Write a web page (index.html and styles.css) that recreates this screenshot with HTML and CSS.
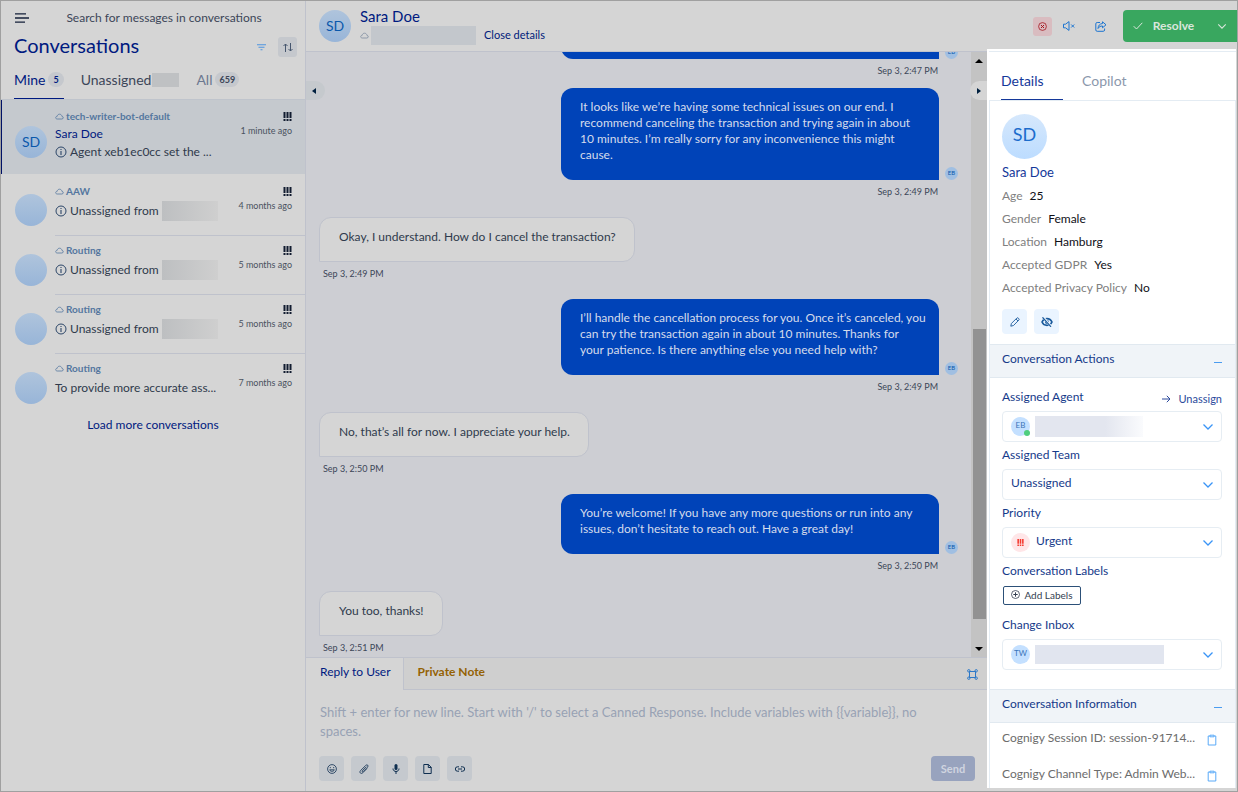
FILE: index.html
```
<!doctype html>
<html lang="en">
<head>
<meta charset="utf-8">
<title>Conversations</title>
<link rel="stylesheet" href="styles.css">
</head>
<body>

<svg class="sprite" aria-hidden="true">
  <symbol id="i-cloud" viewBox="0 0 9 7"><path d="M2.2 6h4.7c.8 0 1.4-.6 1.4-1.3 0-.7-.6-1.2-1.3-1.2C6.800 2.100 5.800 1.200 4.500 1.200S2.400 2.100 2.200 3.300C1.300 3.300.7 3.900.7 4.700.7 5.400 1.300 6 2.200 6z" fill="none" stroke="currentColor" stroke-width=".8"/></symbol>
  <symbol id="i-info" viewBox="0 0 12 12"><circle cx="6" cy="6" r="5" fill="none" stroke="currentColor"/><path d="M6 5v4M6 3v1" stroke="currentColor" stroke-width="1.100"/></symbol>
  <symbol id="i-urgent" viewBox="0 0 9 9"><path d="M1.500 0v6M4.500 0v6M7.500 0v6M1.500 7v2M4.500 7v2M7.500 7v2" stroke="currentColor" stroke-width="2"/></symbol>
  <symbol id="i-chevron" viewBox="0 0 12 8"><path d="M1.500 1.500L6 6l4.500-4.500" fill="none" stroke="currentColor" stroke-width="1.300"/></symbol>
  <symbol id="i-clip" viewBox="0 0 10 12"><path d="M3 2H1.200v9h7.600V2H7M3 1.200h4v1.600H3z" fill="none" stroke="currentColor"/></symbol>
</svg>

<div class="app">

  <aside class="sidebar">
    <div class="search">
      <button class="plain menu" aria-label="Menu"><svg width="14" height="10" viewBox="0 0 14 10"><path d="M0 .8h11M0 5h14M0 9.200h10" stroke="currentColor" stroke-width="1.300"/></svg></button>
      <input type="text" aria-label="Search" placeholder="Search for messages in conversations">
    </div>
    <div class="title">
      <h1>Conversations</h1>
      <button class="plain filter" aria-label="Filter"><svg width="9" height="7" viewBox="0 0 9 7"><path d="M0 .7h9M1.500 3.200h6M3.500 5.800h2" stroke="currentColor" stroke-width="1.100"/></svg></button>
      <button class="sort" aria-label="Sort"><svg width="10" height="9" viewBox="0 0 10 9"><path d="M2.500 9V1M.5 3l2-2 2 2M7.500 0v8M5.500 6l2 2 2-2" fill="none" stroke="currentColor"/></svg></button>
    </div>
    <nav class="tabs">
      <button class="tab active">Mine <span class="count">5</span></button>
      <button class="tab dark">Unassigned<span class="redact small"></span></button>
      <button class="tab">All <span class="count">659</span></button>
    </nav>

    <ul class="list">
      <li class="item selected">
        <span class="avatar">SD</span>
        <div class="info">
          <div class="inbox"><svg class="cloud"><use href="#i-cloud"/></svg>tech-writer-bot-default</div>
          <div class="who">Sara Doe</div>
          <div class="last"><svg class="i12"><use href="#i-info"/></svg>Agent xeb1ec0cc set the ...</div>
        </div>
        <div class="meta"><svg class="i9"><use href="#i-urgent"/></svg><time>1 minute ago</time></div>
      </li>
      <li class="item">
        <span class="avatar"></span>
        <div class="info">
          <div class="inbox"><svg class="cloud"><use href="#i-cloud"/></svg>AAW</div>
          <div class="last"><svg class="i12"><use href="#i-info"/></svg>Unassigned from <span class="redact fade"></span></div>
        </div>
        <div class="meta"><svg class="i9"><use href="#i-urgent"/></svg><time>4 months ago</time></div>
      </li>
      <li class="item">
        <span class="avatar"></span>
        <div class="info">
          <div class="inbox"><svg class="cloud"><use href="#i-cloud"/></svg>Routing</div>
          <div class="last"><svg class="i12"><use href="#i-info"/></svg>Unassigned from <span class="redact fade"></span></div>
        </div>
        <div class="meta"><svg class="i9"><use href="#i-urgent"/></svg><time>5 months ago</time></div>
      </li>
      <li class="item">
        <span class="avatar"></span>
        <div class="info">
          <div class="inbox"><svg class="cloud"><use href="#i-cloud"/></svg>Routing</div>
          <div class="last"><svg class="i12"><use href="#i-info"/></svg>Unassigned from <span class="redact fade"></span></div>
        </div>
        <div class="meta"><svg class="i9"><use href="#i-urgent"/></svg><time>5 months ago</time></div>
      </li>
      <li class="item">
        <span class="avatar"></span>
        <div class="info">
          <div class="inbox"><svg class="cloud"><use href="#i-cloud"/></svg>Routing</div>
          <div class="last">To provide more accurate ass...</div>
        </div>
        <div class="meta"><svg class="i9"><use href="#i-urgent"/></svg><time>7 months ago</time></div>
      </li>
    </ul>
    <button class="plain more">Load more conversations</button>
  </aside>

  <main class="main">
    <header class="top">
      <span class="avatar">SD</span>
      <div class="person">
        <h2>Sara Doe</h2>
        <div class="sub"><svg class="cloud"><use href="#i-cloud"/></svg><span class="redact wide"></span><a href="#">Close details</a></div>
      </div>
      <div class="actions">
        <button class="danger" aria-label="End"><svg width="9" height="9" viewBox="0 0 9 9"><path d="M3 3l3 3M6 3L3 6" stroke="currentColor"/><circle cx="4.500" cy="4.500" r="3.900" fill="none" stroke="currentColor" stroke-width=".8"/></svg></button>
        <button class="plain" aria-label="Mute"><svg width="12" height="10" viewBox="0 0 12 10"><path d="M.5 3.200h2L6 .6v8.800L2.500 6.800h-2zM8.200 3.500l3 3M11.200 3.500l-3 3" fill="none" stroke="currentColor"/></svg></button>
        <button class="plain" aria-label="Share"><svg width="12" height="11" viewBox="0 0 12 11"><path d="M5 1.500H2.200C1.300 1.500.8 2 .8 2.800V9c0 .8.5 1.300 1.400 1.300h6c.9 0 1.400-.5 1.400-1.300V7.500M7.500.8l3.500 3-3.500 3V5C5.500 5 4 5.700 3 7.500c.2-3 1.700-4.700 4.500-5z" fill="none" stroke="currentColor"/></svg></button>
      </div>
      <button class="resolve"><svg width="10" height="8" viewBox="0 0 10 8"><path d="M.7 4.200l2.800 2.800L9.300.8" fill="none" stroke="currentColor"/></svg><span>Resolve</span><svg class="chev" width="10" height="7"><use href="#i-chevron"/></svg></button>
    </header>

    <div class="content">
      <section class="conversation">
        <button class="handle left" aria-label="Collapse list"><svg width="4" height="6" viewBox="0 0 4 6"><path d="M4 0v6L0 3z" fill="currentColor"/></svg></button>
        <div class="chat">
          <div class="messages">
            <div class="msg agent">
              <div class="row"><p class="bubble"></p><span class="mini">EB</span></div>
              <time>Sep 3, 2:47 PM</time>
            </div>
            <div class="msg agent">
              <div class="row"><p class="bubble">It looks like we’re having some technical issues on our end. I recommend canceling the transaction and trying again in about 10&nbsp;minutes. I’m really sorry for any inconvenience this might cause.</p><span class="mini">EB</span></div>
              <time>Sep 3, 2:49 PM</time>
            </div>
            <div class="msg user">
              <div class="row"><p class="bubble">Okay, I understand. How do I cancel the transaction?</p></div>
              <time>Sep 3, 2:49 PM</time>
            </div>
            <div class="msg agent">
              <div class="row"><p class="bubble">I’ll handle the cancellation process for you. Once it’s canceled, you can try the transaction again in about 10 minutes. Thanks for your&nbsp;patience. Is there anything else you need help with?</p><span class="mini">EB</span></div>
              <time>Sep 3, 2:49 PM</time>
            </div>
            <div class="msg user">
              <div class="row"><p class="bubble">No, that’s all for now. I appreciate your help.</p></div>
              <time>Sep 3, 2:50 PM</time>
            </div>
            <div class="msg agent">
              <div class="row"><p class="bubble">You’re welcome! If you have any more questions or run into any issues, don’t hesitate to reach out. Have a great day!</p><span class="mini">EB</span></div>
              <time>Sep 3, 2:50 PM</time>
            </div>
            <div class="msg user">
              <div class="row"><p class="bubble">You too, thanks!</p></div>
              <time>Sep 3, 2:51 PM</time>
            </div>
          </div>
          <div class="scrollbar">
            <svg width="8" height="4" viewBox="0 0 8 4"><path d="M0 4l4-4 4 4z"/></svg>
            <div class="track"><div class="thumb"></div></div>
            <svg width="8" height="4" viewBox="0 0 8 4"><path d="M0 0l4 4 4-4z"/></svg>
          </div>
        </div>

        <form class="composer">
          <div class="modes">
            <button type="button" class="mode active">Reply to User</button>
            <button type="button" class="mode note">Private Note</button>
            <button type="button" class="plain expand" aria-label="Expand"><svg width="11" height="11" viewBox="0 0 11 11"><path d="M2.500 2.500h6v6h-6z" fill="none" stroke="currentColor"/><g fill="none" stroke="currentColor"><circle cx="1.800" cy="1.800" r="1.200"/><circle cx="9.200" cy="1.800" r="1.200"/><circle cx="1.800" cy="9.200" r="1.200"/><circle cx="9.200" cy="9.200" r="1.200"/></g></svg></button>
          </div>
          <textarea rows="2" aria-label="Message" placeholder="Shift + enter for new line. Start with '/' to select a Canned Response. Include variables with {{variable}}, no spaces."></textarea>
          <div class="tools">
            <button type="button" class="tool" aria-label="Emoji"><svg width="10" height="10" viewBox="0 0 10 10"><circle cx="5" cy="5" r="4.400" fill="none" stroke="currentColor" stroke-width=".8"/><path d="M2.600 5.800c.9 2 3.900 2 4.800 0zM3.300 3v1.200M6.700 3v1.200" fill="none" stroke="currentColor" stroke-width=".8"/></svg></button>
            <button type="button" class="tool" aria-label="Attach"><svg width="10" height="10" viewBox="0 0 10 10"><path d="M7.200 2.700L3.200 6.800c-.5.6.3 1.400.9.9l4.500-4.600C9.900 1.600 8.200 0 6.800 1.300L1.600 6.500C-.2 8.400 2 10.500 3.800 8.800L8 4.500" fill="none" stroke="currentColor" stroke-width=".8"/></svg></button>
            <button type="button" class="tool" aria-label="Record"><svg width="8" height="10" viewBox="0 0 8 10"><rect x="2.500" width="3" height="6" rx="1.500" fill="currentColor"/><path d="M1 4.500c0 4 6 4 6 0M4 7.500V10" fill="none" stroke="currentColor"/></svg></button>
            <button type="button" class="tool" aria-label="File"><svg width="9" height="10" viewBox="0 0 9 10"><path d="M.8.5h4.700l2.700 2.800v6.200H.8zM5.300.5v3h3" fill="none" stroke="currentColor"/></svg></button>
            <button type="button" class="tool" aria-label="Link"><svg width="10" height="6" viewBox="0 0 10 6"><path d="M4 .8H2.500a2.200 2.200 0 000 4.400H4M6 .8h1.500a2.200 2.200 0 010 4.400H6M3 3h4" fill="none" stroke="currentColor"/></svg></button>
            <button type="submit" class="send">Send</button>
          </div>
        </form>
      </section>

      <aside class="details">
        <button class="handle right" aria-label="Collapse details"><svg width="4" height="6" viewBox="0 0 4 6"><path d="M0 0v6l4-3z" fill="currentColor"/></svg></button>
        <nav class="dtabs">
          <button class="dtab active">Details</button>
          <button class="dtab">Copilot</button>
        </nav>
        <div class="panel">
          <div class="profile">
            <span class="avatar big">SD</span>
            <h3>Sara Doe</h3>
            <dl>
              <div><dt>Age</dt><dd>25</dd></div>
              <div><dt>Gender</dt><dd>Female</dd></div>
              <div><dt>Location</dt><dd>Hamburg</dd></div>
              <div><dt>Accepted GDPR</dt><dd>Yes</dd></div>
              <div><dt>Accepted Privacy Policy</dt><dd>No</dd></div>
            </dl>
            <div class="edit">
              <button class="tool" aria-label="Edit"><svg width="10" height="10" viewBox="0 0 10 10"><path d="M.8 9.200l.6-2.700L7 .9c.8-.6 2.700 1.200 2 2L3.500 8.500zM6 2l2 2" fill="none" stroke="currentColor" stroke-width=".9"/></svg></button>
              <button class="tool" aria-label="Hide"><svg width="12" height="10" viewBox="0 0 12 10"><path d="M1 5c2-4.500 8-4.500 10 0-2 4.500-8 4.500-10 0z" fill="none" stroke="currentColor" stroke-width="1.600"/><circle cx="6" cy="5" r="2" fill="currentColor"/><path d="M2 0l8.500 10" stroke="#eaf4ff" stroke-width="2.400"/><path d="M1.500 .3l8.500 9.500" stroke="currentColor" stroke-width="1.200"/></svg></button>
            </div>
          </div>

          <h4 class="head"><span>Conversation Actions</span><i></i></h4>
          <div class="fields">
            <div class="label-row"><label for="agent">Assigned Agent</label><button class="plain unassign"><svg width="9" height="8" viewBox="0 0 9 8"><path d="M0 4h8M4.800 .8L8 4 4.800 7.200" fill="none" stroke="currentColor"/></svg>Unassign</button></div>
            <div class="select">
              <span class="badge">EB<b></b></span><span class="redact agent-name"></span>
              <select id="agent"><option></option></select>
              <svg class="arrow"><use href="#i-chevron"/></svg>
            </div>
            <label for="team">Assigned Team</label>
            <div class="select">
              <select id="team"><option>Unassigned</option></select>
              <svg class="arrow"><use href="#i-chevron"/></svg>
            </div>
            <label for="priority">Priority</label>
            <div class="select">
              <span class="badge red"><svg width="7" height="7"><use href="#i-urgent"/></svg></span>
              <select id="priority"><option>Urgent</option></select>
              <svg class="arrow"><use href="#i-chevron"/></svg>
            </div>
            <div class="caption">Conversation Labels</div>
            <button class="add"><svg width="9" height="9" viewBox="0 0 9 9"><circle cx="4.500" cy="4.500" r="4" fill="none" stroke="currentColor" stroke-width=".8"/><path d="M4.500 2.300v4.400M2.300 4.500h4.400" stroke="currentColor"/></svg>Add Labels</button>
            <label for="inbox">Change Inbox</label>
            <div class="select">
              <span class="badge">TW</span><span class="redact inbox-name"></span>
              <select id="inbox"><option></option></select>
              <svg class="arrow"><use href="#i-chevron"/></svg>
            </div>
          </div>

          <h4 class="head"><span>Conversation Information</span><i></i></h4>
          <ul class="facts">
            <li><span>Cognigy Session ID: session-91714...</span><button class="plain" aria-label="Copy"><svg width="10" height="12"><use href="#i-clip"/></svg></button></li>
            <li><span>Cognigy Channel Type: Admin Web...</span><button class="plain" aria-label="Copy"><svg width="10" height="12"><use href="#i-clip"/></svg></button></li>
          </ul>
        </div>
      </aside>
    </div>
  </main>

</div>

</body>
</html>
```
FILE: styles.css
```
* { box-sizing:border-box; }

html, body { height:100%; margin:0; }

body {
  font: 12px/16px Lato, "Open Sans", sans-serif;
  color:#2f3a4c;
  background:#d5d5d5;
}

h1, h2, h3, h4, p, ul, dl, dd { margin:0; padding:0; font-weight:normal; }
ul { list-style:none; }
button, input, select, textarea { font:inherit; color:inherit; border:0; margin:0; padding:0; background:none; }
button { display:flex; align-items:center; justify-content:center; }
svg { flex:none; display:block; }
a { text-decoration:none; }

.sprite { position:absolute; width:0; height:0; }
.cloud { width:9px; height:7px; }
.i9 { width:9px; height:9px; }
.i12 { width:12px; height:12px; }

.app {
  display:flex;
  height:100vh;
  border:1px solid #a0a0a0;
  overflow:hidden;
}

.avatar {
  flex:none;
  display:flex;
  align-items:center;
  justify-content:center;
  width:32px;
  height:32px;
  border-radius:50%;
  background:linear-gradient(#afc4dc, #98b5d8);
  color:#0a58ac;
  font-size:14px;
}

.redact { flex:none; display:block; background:#bfc1c3; }

/* sidebar */
.sidebar { flex:none; width:305px; border-right:1px solid #bfc2cc; }

.search { display:flex; align-items:center; height:32px; padding:2px 14px 0; }
.menu { color:#15203a; width:14px; }
.search input { flex:1; min-width:0; padding-left:8px; text-align:center; outline:0; }
.search input::placeholder { color:#3c4658; opacity:1; }

.title { display:flex; align-items:center; height:28px; padding:0 8px 0 13px; }
.title h1 { flex:1; font-size:20px; line-height:24px; padding-bottom:4px; color:#001a80; }
.filter { color:#4f95e0; margin-right:12px; }
.sort { width:19px; height:20px; border-radius:3px; background:#c5c8cd; color:#46566e; }

.tabs { display:flex; gap:17px; height:39px; padding:0 13px; border-bottom:1px solid #bfc4cc; }
.tab { gap:3px; font-size:14px; color:#6c7890; border-bottom:1px solid transparent; }
.tab.dark { color:#3c4658; gap:1px; }
.tab.active { color:#001a80; border-color:#001a80; }
.count {
  padding:0 4px;
  border-radius:8px;
  background:#c5c8cd;
  font-size:9px;
  line-height:15px;
  font-weight:bold;
  color:#3c4658;
}
.tab.active .count { padding:0 5px; color:#001a80; }
.redact.small { width:27px; height:14px; }

.item { position:relative; display:flex; height:59px; padding:7px 13px 0 14px; }
.item + .item::before {
  content:"";
  position:absolute;
  left:54px; right:0; top:-1px;
  height:1px;
  background:#bfc2cc;
}
.item .avatar { margin:11px 8px 0 0; }
.info { flex:1; min-width:0; }
.inbox { display:flex; align-items:center; gap:2px; font-size:10px; line-height:14px; font-weight:bold; color:#54779f; }
.who { line-height:16px; color:#001a80; margin-top:3px; }
.last { display:flex; align-items:center; gap:3px; height:20px; margin-top:3px; white-space:nowrap; }
.last svg { color:#2c4668; }
.meta { display:flex; flex-direction:column; align-items:flex-end; gap:4px; padding-top:3px; color:#121c30; }
.meta time { font-size:9px; line-height:12px; color:#4a5260; }
.redact.fade { width:56px; height:20px; background:linear-gradient(90deg, #bdbfc1, #cfcfcf); }
.item.selected {
  height:74px;
  margin-bottom:2px;
  padding:9px 13px 0 13px;
  border-left:1px solid #001166;
  background:#c5c9ce;
}
.item.selected .avatar { margin-top:17px; }
.item.selected .last { margin-top:0; }
.item.selected + .item { height:60px; padding-top:8px; }
.item.selected + .item .avatar { margin-top:10px; }
.item.selected + .item::before { display:none; }
.more { margin:4px auto 0; color:#001a80; }

/* header */
.main { flex:1; min-width:0; display:flex; flex-direction:column; }
.top { flex:none; display:flex; align-items:center; height:51px; padding-left:13px; border-bottom:1px solid #bfc2cc; }
.person { margin-left:9px; flex:1; }
.person h2 { font-size:15px; line-height:16px; padding-bottom:2px; color:#001a80; }
.sub { display:flex; align-items:center; height:19px; gap:2px; font-size:11px; }
.sub .cloud { color:#7d8ca0; }
.sub a { margin-left:6px; color:#00207a; }
.redact.wide { width:105px; height:19px; background:#c3c7cc; }
.actions { display:flex; align-items:center; gap:11px; margin-right:12px; color:#1c74d0; }
.actions .plain { width:21px; height:20px; }
.danger { width:19px; height:19px; margin-right:-5px; border-radius:3px; background:#d9bcc0; color:#a5141e; }
.resolve {
  width:114px;
  height:32px;
  border-radius:4px 0 0 4px;
  background:#39a75f;
  color:#d9e6dc;
  font-weight:bold;
  gap:10px;
}
.resolve .chev { margin-left:13px; }

.content { flex:1; min-height:0; display:flex; }

/* conversation */
.conversation { position:relative; flex:1; min-width:0; display:flex; flex-direction:column; }
.chat { flex:1; min-height:0; display:flex; background:#cdced3; }
.messages {
  flex:1;
  min-width:0;
  display:flex;
  flex-direction:column;
  justify-content:flex-end;
  padding:0 13px 3px;
  overflow:hidden;
}
.msg { flex:none; display:flex; flex-direction:column; align-items:flex-start; margin-top:11px; }
.msg.agent { align-items:flex-end; }
.user + .agent, .agent + .user { margin-top:19px; }
.row { display:flex; align-items:flex-end; gap:6px; }
.bubble {
  max-width:378px;
  padding:11px 10px 17px 19px;
  border-radius:12px 12px 0 12px;
  background:#0043b8;
  color:#d5dcec;
}
.bubble:empty { width:378px; height:60px; }
.user .bubble {
  padding:11px 18px 16px 19px;
  border:1px solid #bfc2cc;
  border-radius:12px 12px 12px 0;
  background:#d5d5d5;
  color:#2f3a4c;
}
.msg time { margin:6px 4px 0; font-size:9px; line-height:12px; color:#3c4658; }
.msg.agent time { margin-right:20px; }
.mini {
  width:13px;
  height:13px;
  border-radius:50%;
  background:#a0bfe2;
  color:#0a58ac;
  font-size:6px;
  line-height:11px;
  text-align:center;
}

.scrollbar {
  flex:none;
  width:16px;
  display:flex;
  flex-direction:column;
  align-items:center;
  gap:8px;
  padding:7px 0 6px;
  background:#c3c3c3;
}
.track { flex:1; width:13px; display:flex; flex-direction:column; justify-content:flex-end; padding-bottom:20px; }
.thumb { height:53%; background:#929292; }

.handle {
  position:absolute;
  top:29px;
  width:19px;
  height:19px;
  color:#00203f;
}
.handle.left { left:0; padding-right:3px; border-radius:0 10px 10px 0; background:#c5c9cd; }
.handle.right { left:-17px; top:32px; width:17px; border-radius:10px 0 0 10px; background:#d5d5d5; }

/* composer */
.composer { flex:none; border-top:1px solid #bfc2cc; }
.modes { display:flex; height:32px; padding-right:9px; background:linear-gradient(#bfc2cc, #bfc2cc) 0 100%/100% 1px no-repeat #cfcfcf; }
.mode { padding:0 14px 4px; font-weight:bold; }
.mode.active { padding:0 12px 4px 14px; font-weight:normal; color:#001a80; background:#d5d5d5; border-right:1px solid #bfc2cc; }
.mode.note { color:#946204; }
.expand { width:11px; margin-left:auto; color:#2c78c8; }
.composer textarea { display:block; width:100%; height:38px; margin-top:13px; padding:0 30px 0 14px; font-size:13px; line-height:19px; resize:none; outline:0; overflow:hidden; }
.composer textarea::placeholder { color:#98a2b4; opacity:1; }
.tools { display:flex; gap:7px; padding:15px 12px 10px 13px; }
.tool { width:25px; height:25px; border-radius:4px; background:#c5c9ce; color:#0f2f50; }
.send { width:44px; height:25px; margin-left:auto; border-radius:4px; background:#98a3be; color:#d0d5e0; font-size:11px; font-weight:bold; }

/* details */
.details {
  position:relative;
  flex:none;
  width:250px;
  margin:-3px 0 3px;
  padding-left:2px;
  border-right:1px solid #d5d5d5;
  background:#fff;
  color:#153a8a;
  display:flex;
  flex-direction:column;
}
.dtabs { flex:none; display:flex; gap:19px; height:50px; margin-top:2px; padding-left:12px; border:solid #e4ecf3; border-width:1px 0; }
.dtab { font-size:14px; padding-top:10px; min-width:62px; justify-content:flex-start; color:#8b98ac; border-bottom:1px solid transparent; }
.dtab.active { color:#14389a; border-color:#14389a; }
.panel { flex:1; min-height:0; overflow:hidden; border:solid #e4ecf3; border-width:0 1px; }
.profile { padding:13px 12px 10px; }
.avatar.big { width:45px; height:45px; font-size:18px; padding-bottom:6px; background:linear-gradient(#d6e8fc, #bcdcff); color:#1c6ccc; }
.profile h3 { font-size:13px; line-height:18px; margin:4px 0 3px; color:#14389a; }
.profile dl div { display:flex; gap:7px; height:23px; line-height:23px; }
dt { color:#808080; }
dd { color:#101018; }
.edit { display:flex; gap:7px; margin-top:10px; }
.edit .tool { background:#eaf4ff; color:#1a5a9c; }

.head {
  display:flex;
  align-items:center;
  justify-content:space-between;
  height:34px;
  padding:0 13px 4px 12px;
  border:solid #e1e9f0;
  border-width:1px 0;
  background:#f0f4f8;
}
.head i { width:8px; height:1px; margin-top:7px; background:#4a9cf0; }

.fields { display:flex; flex-direction:column; padding:11px 13px 14px 12px; }
.fields label, .caption { line-height:16px; margin-bottom:6px; }
.label-row { display:flex; justify-content:space-between; align-items:flex-start; }
.unassign { gap:7px; font-size:11px; padding-top:2px; color:#2c4a9c; }
.select {
  position:relative;
  display:flex;
  align-items:center;
  height:31px;
  margin-bottom:5px;
  padding-left:8px;
  border:1px solid #e6edf3;
  border-radius:4px;
}
.select select { flex:1; min-width:0; height:27px; padding-bottom:4px; appearance:none; outline:0; }
.badge {
  position:relative;
  flex:none;
  width:19px;
  height:19px;
  margin-right:5px;
  border-radius:50%;
  background:#c4e0ff;
  font-size:8px;
  line-height:16px;
  text-align:center;
  color:#3a74b8;
}
.badge b { position:absolute; right:0; bottom:0; width:6px; height:6px; border-radius:50%; background:#4fce7e; }
.badge.red { display:flex; align-items:center; justify-content:center; margin-right:6px; background:#ffe6e8; color:#f43a30; }
.arrow { position:absolute; right:7px; top:11px; width:12px; height:8px; color:#3a94f6; pointer-events:none; }
.redact.agent-name { width:108px; height:21px; background:linear-gradient(90deg, #e3e6ef 65%, #fafbfd); }
.redact.inbox-name { width:129px; height:19px; background:#e1e5ef; }
.add {
  align-self:flex-start;
  width:78px;
  height:19px;
  margin:1px 0 12px 1px;
  padding-bottom:2px;
  gap:4px;
  border:1px solid #2c5078;
  border-radius:2px;
  color:#343e50;
  font-size:10px;
}

.facts li { display:flex; justify-content:space-between; align-items:center; height:36px; padding:0 18px 6px 12px; color:#6c6c6c; white-space:nowrap; }
.facts svg { margin-top:4px; color:#5aaaf8; }
```
